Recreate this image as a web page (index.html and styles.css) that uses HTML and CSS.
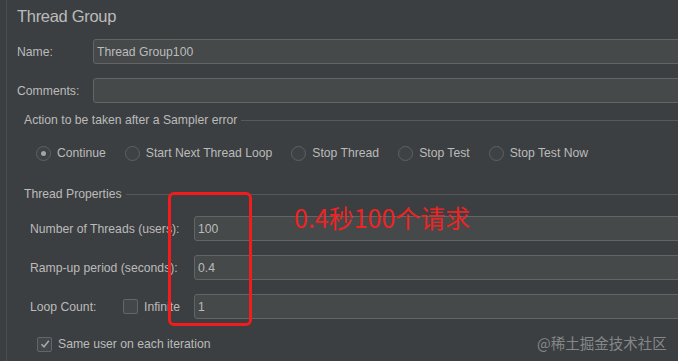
FILE: index.html
```html
<!DOCTYPE html>
<html lang="en">
<head>
  <meta charset="UTF-8">
  <meta name="viewport" content="width=device-width, initial-scale=1.0">
  <title>Thread Group</title>
  <link rel="stylesheet" href="styles.css">
</head>
<body>
  <div class="panel">
    <h1 class="title">Thread Group</h1>

    <div class="row">
      <label class="label-main">Name:</label>
      <input class="text-input" type="text" value="Thread Group100">
    </div>
    <div class="row">
      <label class="label-main">Comments:</label>
      <input class="text-input" type="text" value="">
    </div>

    <!-- sampler error -->
    <div class="group-title">Action to be taken after a Sampler error</div>
    <div class="radios">
      <span class="radio"><span class="radio-box checked"></span>Continue</span>
      <span class="radio"><span class="radio-box"></span>Start Next Thread Loop</span>
      <span class="radio"><span class="radio-box"></span>Stop Thread</span>
      <span class="radio"><span class="radio-box"></span>Stop Test</span>
      <span class="radio"><span class="radio-box"></span>Stop Test Now</span>
    </div>

    <!-- thread properties -->
    <div class="group-title props-title">Thread Properties</div>
    <div class="props">
      <div class="row">
        <label class="label-prop">Number of Threads (users):</label>
        <input class="text-input" type="text" value="100">
      </div>
      <div class="row">
        <label class="label-prop">Ramp-up period (seconds):</label>
        <input class="text-input" type="text" value="0.4">
      </div>
      <div class="row">
        <div class="label-prop loop">
          <span class="loop-text">Loop Count:</span>
          <span class="check-box"></span>
          <span>Infinite</span>
        </div>
        <input class="text-input" type="text" value="1">
      </div>
    </div>

    <div class="check-row">
      <span class="check-box">
        <svg width="12" height="12" viewBox="0 0 12 12"><path d="M2.5 6.2 L5 8.8 L9.8 2.8" fill="none" stroke="#a9abad" stroke-width="1.5"/></svg>
      </span>
      <span>Same user on each iteration</span>
    </div>
  </div>

  <div class="mark-box"></div>
  <div class="mark-text">0.4秒100个请求</div>
  <div class="watermark">@稀土掘金技术社区</div>
</body>
</html>
```

FILE: styles.css
```css
body {
  margin: 0;
  background-color: #3c3f41;
  font-family: "Liberation Sans", Arial, sans-serif;
  font-size: 12.2px;
  color: #bbbbbb;
  height: 361px;
  overflow: hidden;
  position: relative;
}

.panel {
  margin-left: 6px;
  margin-right: -20px;
  border-left: 1px solid #4b4e50;
  padding: 6px 0 0 10px;
  height: 355px;
}

.title {
  font-size: 16.5px;
  font-weight: normal;
  line-height: 20px;
  margin: 0 0 13px 0;
  letter-spacing: -0.3px;
}

.row {
  display: flex;
  align-items: center;
  height: 25px;
}

.row + .row {
  margin-top: 14px;
}

.label-main {
  width: 76px;
  flex-shrink: 0;
}

.text-input {
  flex: 1;
  height: 25px;
  box-sizing: border-box;
  background-color: #45494a;
  border: 1px solid #646464;
  border-radius: 3px;
  color: #bbbbbb;
  font: inherit;
  padding: 0 3px;
  outline: none;
}

.group-title {
  display: flex;
  align-items: center;
  height: 16px;
  margin: 9px 0 0 7px;
  white-space: nowrap;
}

.group-title::after {
  content: "";
  flex: 1;
  border-top: 1px solid #56595b;
  margin-left: 4px;
}

.props-title {
  margin-top: 25px;
}

.radios {
  display: flex;
  align-items: center;
  gap: 19px;
  height: 16px;
  margin: 17px 0 0 19px;
}

.radio {
  display: flex;
  align-items: center;
  gap: 6px;
  white-space: nowrap;
}

.radio-box {
  width: 13px;
  height: 13px;
  border: 1px solid #5f6264;
  border-radius: 50%;
  background-color: #3e4244;
  position: relative;
}

.radio-box.checked::after {
  content: "";
  position: absolute;
  left: 4px;
  top: 4px;
  width: 5px;
  height: 5px;
  border-radius: 50%;
  background-color: #a2a4a6;
}

.props {
  margin: 14px 0 0 13px;
}

.label-prop {
  width: 164px;
  flex-shrink: 0;
  white-space: nowrap;
}

.loop {
  display: flex;
  align-items: center;
}

.loop-text {
  width: 93px;
}

.check-box {
  width: 13px;
  height: 13px;
  border: 1px solid #636668;
  border-radius: 2px;
  background-color: #43474a;
  margin-right: 6px;
  display: flex;
  align-items: center;
  justify-content: center;
}

.check-row {
  display: flex;
  align-items: center;
  height: 16px;
  margin: 17px 0 0 20px;
}

.mark-box {
  position: absolute;
  left: 168px;
  top: 192px;
  width: 78px;
  height: 128px;
  border: 3px solid #f21c1c;
  border-radius: 6px;
}

.mark-text {
  position: absolute;
  left: 294px;
  top: 202px;
  font-family: "Noto Sans CJK SC", sans-serif;
  font-size: 25px;
  line-height: 30px;
  color: #ec2424;
  white-space: nowrap;
}

.watermark {
  position: absolute;
  left: 537px;
  top: 333px;
  font-family: "Noto Sans CJK SC", sans-serif;
  font-size: 14.5px;
  line-height: 20px;
  color: #85888a;
  white-space: nowrap;
}
```
